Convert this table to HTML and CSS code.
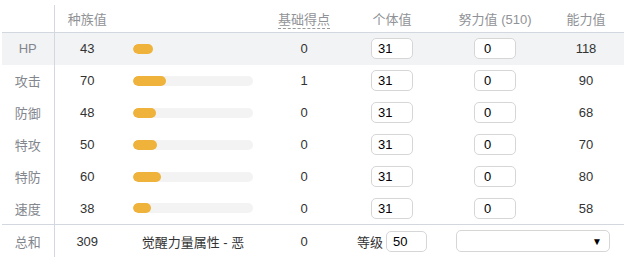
FILE: index.html
```html
<!DOCTYPE html>
<html>
<head>
<meta charset="utf-8">
<link rel="stylesheet" href="styles.css">
</head>
<body>
<table class="stats">
  <colgroup>
    <col class="c-label"><col class="c-base"><col class="c-bar"><col class="c-pts"><col class="c-iv"><col class="c-ev"><col class="c-val">
  </colgroup>
  <thead>
    <tr class="head">
      <th class="label"></th>
      <th>种族值</th>
      <th></th>
      <th><span class="dashed">基础得点</span></th>
      <th>个体值</th>
      <th>努力值 (510)</th>
      <th>能力值</th>
    </tr>
  </thead>
  <tbody>
    <tr class="hl">
      <td class="label">HP</td><td>43</td>
      <td class="barcell"><div class="track"><div class="fill" style="width:20px"></div></div></td>
      <td>0</td><td><input class="box iv" value="31"></td><td><input class="box ev" value="0"></td><td>118</td>
    </tr>
    <tr>
      <td class="label">攻击</td><td>70</td>
      <td class="barcell"><div class="track"><div class="fill" style="width:33px"></div></div></td>
      <td>1</td><td><input class="box iv" value="31"></td><td><input class="box ev" value="0"></td><td>90</td>
    </tr>
    <tr>
      <td class="label">防御</td><td>48</td>
      <td class="barcell"><div class="track"><div class="fill" style="width:23px"></div></div></td>
      <td>0</td><td><input class="box iv" value="31"></td><td><input class="box ev" value="0"></td><td>68</td>
    </tr>
    <tr>
      <td class="label">特攻</td><td>50</td>
      <td class="barcell"><div class="track"><div class="fill" style="width:24px"></div></div></td>
      <td>0</td><td><input class="box iv" value="31"></td><td><input class="box ev" value="0"></td><td>70</td>
    </tr>
    <tr>
      <td class="label">特防</td><td>60</td>
      <td class="barcell"><div class="track"><div class="fill" style="width:28px"></div></div></td>
      <td>0</td><td><input class="box iv" value="31"></td><td><input class="box ev" value="0"></td><td>80</td>
    </tr>
    <tr>
      <td class="label">速度</td><td>38</td>
      <td class="barcell"><div class="track"><div class="fill" style="width:18px"></div></div></td>
      <td>0</td><td><input class="box iv" value="31"></td><td><input class="box ev" value="0"></td><td>58</td>
    </tr>
    <tr class="total">
      <td class="label">总和</td><td>309</td>
      <td>觉醒力量属性 - 恶</td>
      <td>0</td>
      <td><span class="lv">等级</span><input class="box lvbox" value="50"></td>
      <td colspan="2"><div class="select"><span class="arrow">▼</span></div></td>
    </tr>
  </tbody>
</table>
</body>
</html>
```

FILE: styles.css
```css
html, body {
  margin: 0;
  padding: 0;
  background: #ffffff;
}
body {
  padding: 5px 0 0 2px;
  font-family: "Liberation Sans", "Noto Sans CJK SC", sans-serif;
  font-size: 13px;
  color: #333333;
}
.stats {
  border-collapse: collapse;
  table-layout: fixed;
  width: 622px;
}
.c-label { width: 52px; }
.c-base { width: 66px; }
.c-bar { width: 146px; }
.c-pts { width: 76px; }
.c-iv { width: 100px; }
.c-ev { width: 106px; }
.c-val { width: 76px; }

th, td {
  padding: 0;
  text-align: center;
  vertical-align: middle;
}
.head th {
  height: 26px;
  font-weight: normal;
  color: #909296;
  border-bottom: 1px solid #d3d8e0;
  padding-bottom: 1px;
}
.label {
  border-right: 1px solid #d3d8e0;
  color: #83868d;
}
tbody tr { height: 32px; }
tbody tr.hl td { background: #f2f3f5; }
tbody tr.total td { border-top: 1px solid #d3d8e0; height: 32px; }
.dashed {
  border-bottom: 1px dashed #9a9a9a;
  padding-bottom: 1px;
}
.barcell { text-align: left; padding-left: 13px; }
.track {
  width: 120px;
  height: 10px;
  border-radius: 5px;
  background: #f3f3f3;
  overflow: hidden;
}
.hl .track { background: #f2f3f5; }
.fill {
  height: 10px;
  border-radius: 5px;
  background: #efb33b;
}
.box {
  box-sizing: border-box;
  width: 42px;
  height: 21px;
  border: 1px solid #d6d6d6;
  border-radius: 5px;
  background: #ffffff;
  font-family: "Liberation Sans", sans-serif;
  font-size: 13px;
  color: #000000;
  padding: 0 0 0 6px;
  margin: 0;
  vertical-align: middle;
  outline: none;
}
.box.ev { padding-left: 9px; }
.lv {
  color: #333333;
  vertical-align: middle;
  margin-right: 3px;
}
.lvbox { width: 41px; }
.select {
  box-sizing: border-box;
  width: 154px;
  height: 22px;
  margin: 0 auto;
  border: 1px solid #d6d6d6;
  border-radius: 5px;
  display: flex;
  align-items: center;
  justify-content: flex-end;
  padding-right: 7px;
}
.arrow {
  font-size: 10px;
  color: #000000;
}
```
